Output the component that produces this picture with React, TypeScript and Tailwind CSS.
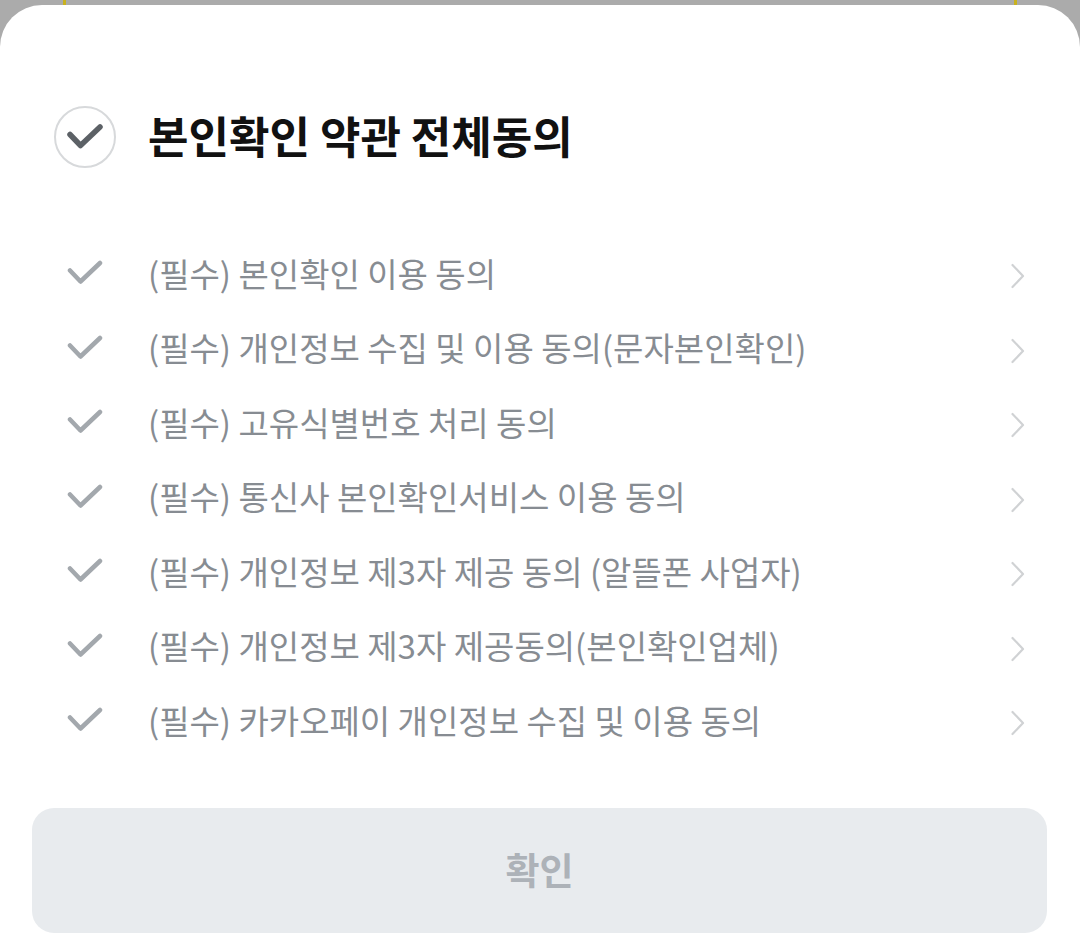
import type React from 'react'

const TERMS = [
  '(필수) 본인확인 이용 동의',
  '(필수) 개인정보 수집 및 이용 동의(문자본인확인)',
  '(필수) 고유식별번호 처리 동의',
  '(필수) 통신사 본인확인서비스 이용 동의',
  '(필수) 개인정보 제3자 제공 동의 (알뜰폰 사업자)',
  '(필수) 개인정보 제3자 제공동의(본인확인업체)',
  '(필수) 카카오페이 개인정보 수집 및 이용 동의'
]

function CheckMark({ color, width }: { color: string; width: number }): React.JSX.Element {
  return (
    <svg width="36" height="26" viewBox="0 0 36 26" fill="none">
      <path
        d="M3 10.5 L13.5 21.5 L33 3"
        stroke={color}
        strokeWidth={width}
        strokeLinecap="round"
        strokeLinejoin="round"
      />
    </svg>
  )
}

function Chevron(): React.JSX.Element {
  return (
    <svg width="16" height="26" viewBox="0 0 16 26" fill="none">
      <path
        d="M2.5 2 L13 13 L2.5 24"
        stroke="#d0d2d4"
        strokeWidth="2.2"
        strokeLinecap="round"
        strokeLinejoin="round"
      />
    </svg>
  )
}

function TermRow({ label }: { label: string }): React.JSX.Element {
  return (
    <div className="flex h-[74.5px] items-center">
      <div className="flex w-[62px] shrink-0 justify-center">
        <CheckMark color="#a3a8ad" width={4.5} />
      </div>
      <span className="ml-[32px] flex-1 text-[33px] leading-none text-[#878c92]">{label}</span>
      <div className="mt-[6px] flex w-[16px] justify-center">
        <Chevron />
      </div>
    </div>
  )
}

export default function App(): React.JSX.Element {
  return (
    <div
      className="flex h-[945px] w-full flex-col overflow-hidden bg-[#ababab]"
      style={{ fontFamily: '"Noto Sans CJK KR", "Noto Sans", sans-serif' }}
    >
      {/* backdrop strip */}
      <div className="flex h-[5px] shrink-0 justify-between px-[63px]">
        <div className="w-[3px] bg-[#c9b21e]" />
        <div className="w-[3px] bg-[#c9b21e]" />
      </div>

      {/* bottom sheet */}
      <div className="flex flex-1 flex-col rounded-t-[42px] bg-white">
        <div className="flex flex-col px-[54px] pt-[101px]">
          {/* all-agree row */}
          <div className="flex h-[62px] items-center">
            <div className="flex h-[62px] w-[62px] shrink-0 items-center justify-center rounded-full border-[2.5px] border-[#d7d9db]">
              <CheckMark color="#5c6166" width={5.5} />
            </div>
            <span className="ml-[32px] mb-[4px] text-[44px] font-bold leading-none text-[#111111]">
              본인확인 약관 전체동의
            </span>
          </div>

          {/* terms list */}
          <div className="mt-[68px] flex flex-col">
            {TERMS.map((t) => (
              <TermRow key={t} label={t} />
            ))}
          </div>
        </div>

        {/* confirm button */}
        <div className="mt-[50px] pl-[32px] pr-[33px]">
          <button className="flex h-[125px] w-full items-center justify-center rounded-[22px] bg-[#e8ebee] text-[37px] font-bold text-[#adb2b8]">
            확인
          </button>
        </div>
      </div>
    </div>
  )
}
